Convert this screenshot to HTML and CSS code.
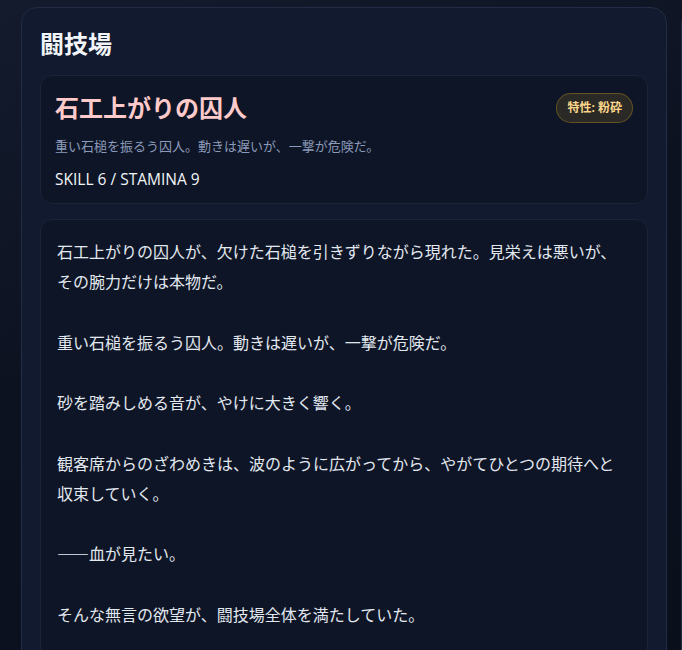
FILE: index.html
```html
<!DOCTYPE html>
<html lang="ja">
<head>
    <meta charset="UTF-8">
    <meta name="viewport" content="width=device-width, initial-scale=1.0">
    <title>闘技場</title>
    <link rel="stylesheet" href="styles.css">
</head>
<body>
    <div class="layout">
        <section class="panel arena">
            <h2 class="panel-title">闘技場</h2>

            <div class="enemy-card">
                <div class="enemy-head">
                    <h3 class="enemy-name">石工上がりの囚人</h3>
                    <span class="trait">特性: 粉砕</span>
                </div>
                <p class="enemy-desc">重い石槌を振るう囚人。動きは遅いが、一撃が危険だ。</p>
                <p class="enemy-stats">SKILL 6 / STAMINA 9</p>
            </div>

            <div class="story">石工上がりの囚人が、欠けた石槌を引きずりながら現れた。見栄えは悪いが、その腕力だけは本物だ。

重い石槌を振るう囚人。動きは遅いが、一撃が危険だ。

砂を踏みしめる音が、やけに大きく響く。

観客席からのざわめきは、波のように広がってから、やがてひとつの期待へと収束していく。

——血が見たい。

そんな無言の欲望が、闘技場全体を満たしていた。</div>
        </section>

        <aside class="panel side"></aside>
    </div>
</body>
</html>
```

FILE: styles.css
```css
html, body {
    margin: 0;
    height: 100%;
    overflow: hidden;
}

body {
    font-family: "Open Sans", "Noto Sans CJK JP", sans-serif;
    background: linear-gradient(160deg, #141b2d 0%, #0c1220 45%, #0a0f1c 100%);
    color: #e2e8f0;
}

.layout {
    display: flex;
    gap: 14px;
    padding: 7px 0 0 21px;
}

.panel {
    flex-shrink: 0;
    background: #111a2e;
    border: 1px solid #222d45;
    border-radius: 16px;
    box-sizing: border-box;
}

.arena {
    width: 646px;
    padding: 18px;
}

.side {
    width: 300px;
    min-height: 700px;
}

.panel-title {
    margin: 0 0 13px;
    font-size: 24px;
    line-height: 36px;
    font-weight: 700;
    color: #f1f5f9;
}

/* enemy card */
.enemy-card {
    background: #0e1526;
    border: 1px solid #1b2438;
    border-radius: 12px;
    padding: 14px;
}

.enemy-head {
    display: flex;
    align-items: center;
    justify-content: space-between;
}

.enemy-name {
    margin: 0;
    font-size: 24px;
    line-height: 36px;
    font-weight: 700;
    color: #fecaca;
}

.trait {
    font-size: 12px;
    line-height: 18px;
    font-weight: 700;
    color: #fcd68a;
    background: rgba(251, 191, 36, 0.12);
    border: 1px solid rgba(251, 191, 36, 0.28);
    border-radius: 999px;
    padding: 5px 10px;
}

.enemy-desc {
    margin: 10px 0 0;
    font-size: 13px;
    line-height: 20px;
    color: #8a9ab8;
}

.enemy-stats {
    margin: 13px 0 0;
    font-size: 15.5px;
    line-height: 20px;
    color: #f1f5f9;
}

/* story text */
.story {
    margin-top: 15px;
    background: #0e1526;
    border: 1px solid #1b2438;
    border-radius: 12px;
    padding: 16px 24px 28px 16px;
    font-family: "Noto Sans CJK JP", sans-serif;
    font-size: 16px;
    line-height: 1.89;
    white-space: pre-wrap;
    color: #e2e8f0;
}
```
